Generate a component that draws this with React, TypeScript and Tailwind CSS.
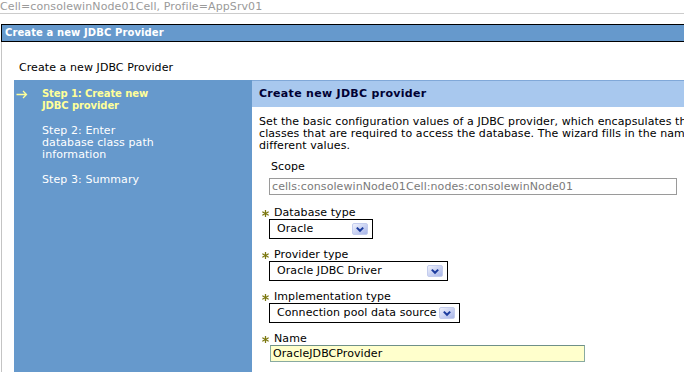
import React from "react";

function Star() {
  return (
    <svg width="7" height="7" viewBox="0 0 7 7" className="shrink-0">
      <g stroke="#7c7810" strokeWidth="1.3" strokeLinecap="round">
        <line x1="3.5" y1="0.5" x2="3.5" y2="6.5" />
        <line x1="0.8" y1="2" x2="6.2" y2="5" />
        <line x1="0.8" y1="5" x2="6.2" y2="2" />
      </g>
    </svg>
  );
}

function DropButton() {
  return (
    <div className="w-[16px] h-[12px] rounded-[2px] border border-[#c4cdee] bg-gradient-to-br from-[#f0f2fc] to-[#a9b6e8] flex items-center justify-center shrink-0">
      <svg width="10" height="7" viewBox="0 0 10 7">
        <path d="M1.8 1.6 L5 4.8 L8.2 1.6" fill="none" stroke="#1c3c9e" strokeWidth="2" />
      </svg>
    </div>
  );
}

function Label({ text }: { text: string }) {
  return (
    <div className="flex h-[12px] items-center -ml-[7px]">
      <Star />
      <span className="ml-[5px] whitespace-nowrap">{text}</span>
    </div>
  );
}

function Select({ value, width }: { value: string; width: string }) {
  return (
    <div className={`h-[20px] border border-black flex items-center justify-between pl-[7px] pr-[4px] ${width}`}>
      <span className="whitespace-nowrap">{value}</span>
      <DropButton />
    </div>
  );
}

export default function App() {
  return (
    <div className="w-[684px] h-[372px] overflow-hidden bg-white font-['DejaVu_Sans',sans-serif] text-[11px] leading-[12px] tracking-[0.08px] text-black">
      <div className="h-[14px] border-b border-[#cccccc] whitespace-nowrap text-[#9a9a9a] leading-[13px] tracking-[0.1px]">
        Cell=consolewinNode01Cell, Profile=AppSrv01
      </div>
      <div className="ml-[1px] mt-[10px] w-[800px]">
        <div className="h-[18px] border border-black bg-[#6699cc] flex items-center pl-[3px] text-white font-bold text-[10px] tracking-[0.1px] whitespace-nowrap">
          Create a new JDBC Provider
        </div>
        <div className="border-l border-[#c4c4c4] h-[400px] pt-[20px] pl-[12px]">
          <div className="ml-[5px] whitespace-nowrap">Create a new JDBC Provider</div>
          <div className="mt-[6px] flex h-[320px]">
            <div className="w-[238px] shrink-0 bg-[#6699cc] pt-[8px] flex flex-col gap-[13px]">
              <div className="flex">
                <div className="w-[28px] pl-[2px] h-[12px] flex items-center">
                  <svg width="12" height="9" viewBox="0 0 12 9">
                    <path d="M0.5 4.5 H10.5 M7 1 L10.5 4.5 L7 8" fill="none" stroke="#ffff99" strokeWidth="1.3" />
                  </svg>
                </div>
                <div className="font-bold text-[10px] text-[#ffff99] tracking-[-0.1px]">
                  Step 1: Create new
                  <br />
                  JDBC provider
                </div>
              </div>
              <div className="flex">
                <div className="w-[28px]" />
                <div className="text-white">
                  Step 2: Enter
                  <br />
                  database class path
                  <br />
                  information
                </div>
              </div>
              <div className="flex">
                <div className="w-[28px]" />
                <div className="text-white">Step 3: Summary</div>
              </div>
            </div>
            <div className="flex-1">
              <div className="h-[27px] border-t border-[#80a8d8] bg-[#a8c8ee] flex items-center pl-[7px] font-bold tracking-[0.3px] text-[#000033] whitespace-nowrap">
                Create new JDBC provider
              </div>
              <div className="pl-[7px] pt-[9px]">
                <div className="whitespace-nowrap">
                  Set the basic configuration values of a JDBC provider, which encapsulates the specific JDBC driver implementation
                </div>
                <div className="whitespace-nowrap">
                  classes that are required to access the database. The wizard fills in the name and the description fields, but you can type
                </div>
                <div className="whitespace-nowrap">different values.</div>
                <div className="ml-[10px]">
                  <div className="mt-[9px] pl-[2px]">Scope</div>
                  <div className="mt-[5px] w-[408px] h-[17px] border border-[#9a9a9a] text-[#7a7a7a] pl-[2px] flex items-center whitespace-nowrap">
                    cells:consolewinNode01Cell:nodes:consolewinNode01
                  </div>
                  <div className="mt-[12px]">
                    <Label text="Database type" />
                    <Select value="Oracle" width="w-[104px]" />
                  </div>
                  <div className="mt-[10px]">
                    <Label text="Provider type" />
                    <Select value="Oracle JDBC Driver" width="w-[179px]" />
                  </div>
                  <div className="mt-[10px]">
                    <Label text="Implementation type" />
                    <Select value="Connection pool data source" width="w-[191px]" />
                  </div>
                  <div className="mt-[10px]">
                    <Label text="Name" />
                    <div className="ml-[1px] w-[315px] h-[17px] border border-[#88aaa0] border-t-[#6f9088] bg-[#ffffcc] pl-[2px] flex items-center whitespace-nowrap">
                      OracleJDBCProvider
                    </div>
                  </div>
                </div>
              </div>
            </div>
          </div>
        </div>
      </div>
    </div>
  );
}
